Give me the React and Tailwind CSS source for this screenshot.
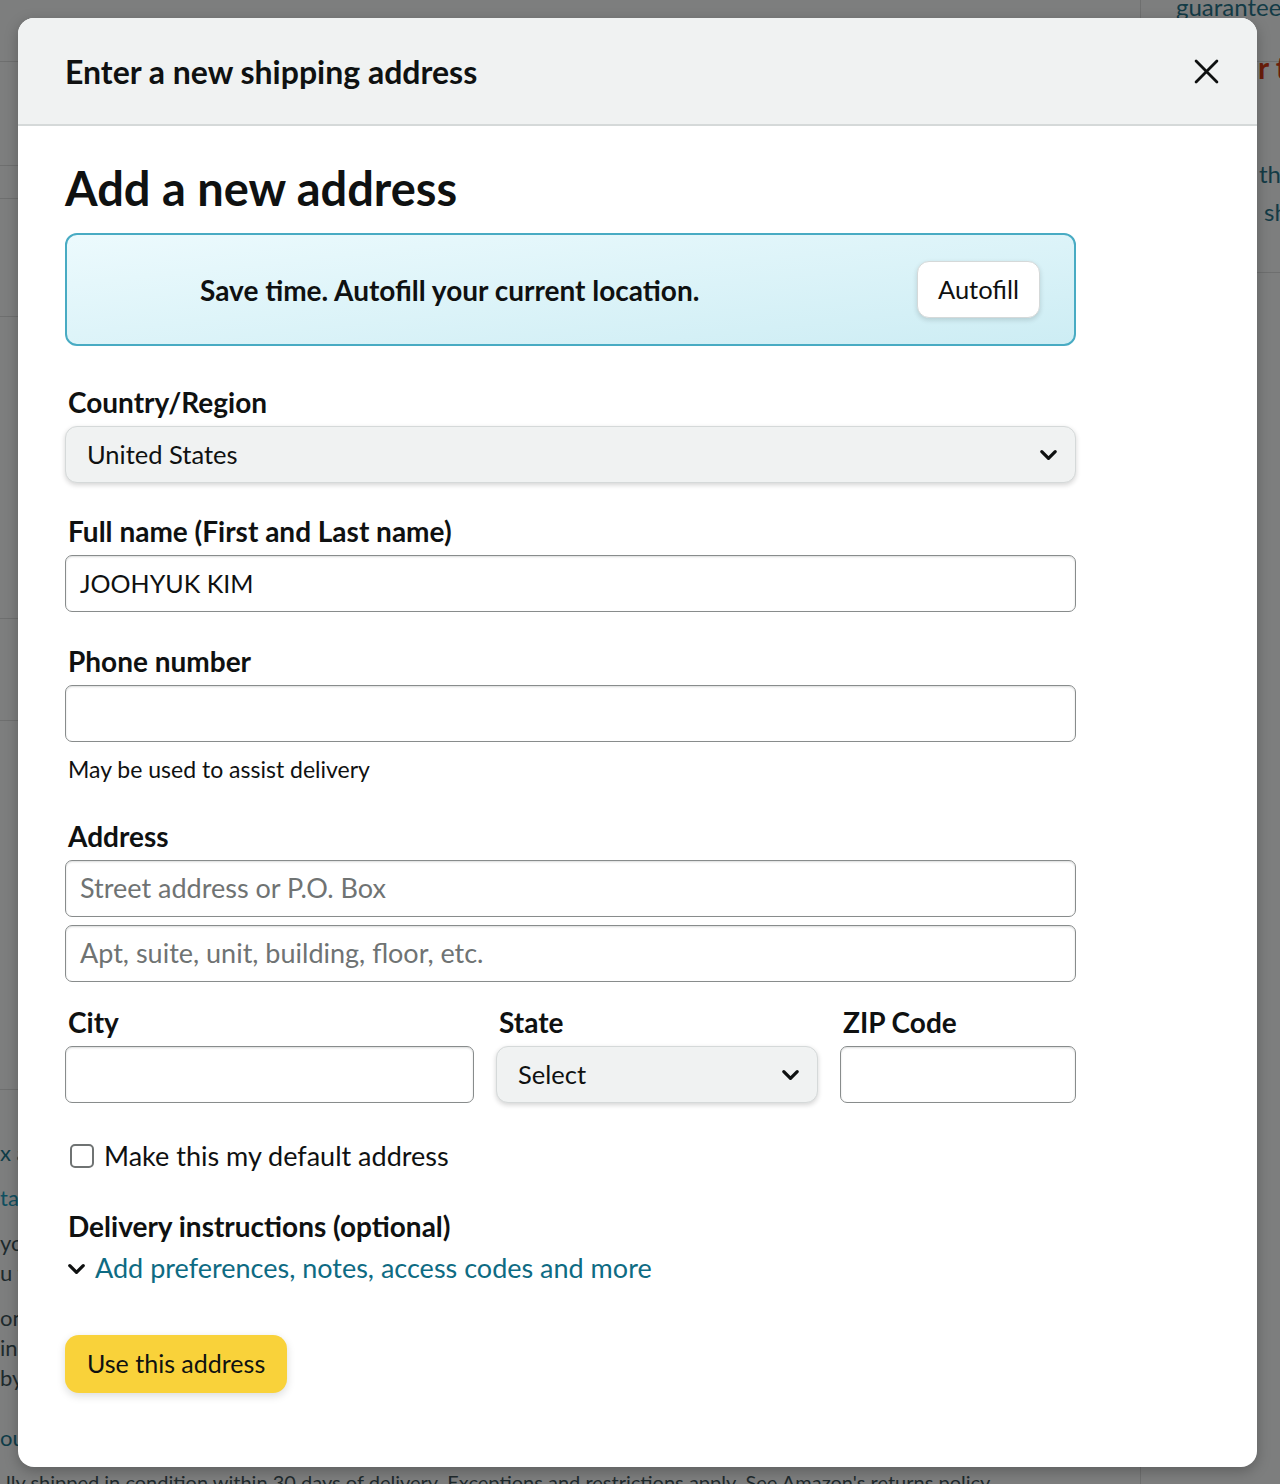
import React from "react";

const font = { fontFamily: "Lato, 'Liberation Sans', sans-serif" };

const Chevron = ({ className = "" }) => (
  <svg viewBox="0 0 24 24" className={className} fill="none" stroke="currentColor" strokeWidth="3.4" strokeLinecap="round" strokeLinejoin="round">
    <path d="M5 9l7 7 7-7" />
  </svg>
);

const Label = ({ children }) => (
  <div className="px-[3px] text-[28px] font-bold leading-[32px] text-[#0f1111]">{children}</div>
);

const TextInput = ({ value, placeholder, className = "" }) => (
  <div className={"flex h-[57px] items-center rounded-[7px] border-[1.5px] border-[#888c8c] bg-white px-[14px] shadow-[inset_0_1px_2px_rgba(15,17,17,0.15)] " + className}>
    {value ? (
      <span className="text-[25px] text-[#0f1111]">{value}</span>
    ) : (
      <span className="text-[27px] text-[#6f7373]">{placeholder}</span>
    )}
  </div>
);

const SelectBox = ({ value, className = "" }) => (
  <div className={"flex h-[57px] items-center justify-between rounded-[12px] border border-[#d5d9d9] bg-[#f0f2f2] pl-[21px] pr-[15px] text-[25.5px] text-[#0f1111] shadow-[0_2px_5px_rgba(15,17,17,0.18)] " + className}>
    <span>{value}</span>
    <Chevron className="h-[23px] w-[23px] text-[#0f1111]" />
  </div>
);

function BackgroundPage() {
  return (
    <div className="flex h-[1484px] w-full bg-[#7d7e7e]">
      <div className="flex w-[1140px] shrink-0 flex-col">
        <div className="h-[62px] shrink-0 border-b border-[#6e6f6f]" />
        <div className="h-[104px] shrink-0 border-b border-[#6e6f6f]" />
        <div className="h-[33px] shrink-0 border-b border-[#6e6f6f]" />
        <div className="h-[118px] shrink-0 border-b border-[#6e6f6f]" />
        <div className="h-[302px] shrink-0 border-b border-[#6e6f6f]" />
        <div className="h-[102px] shrink-0 border-b border-[#6e6f6f]" />
        <div className="h-[369px] shrink-0 border-b border-[#6e6f6f]" />
        <div className="flex shrink-0 flex-col pt-[48px] text-[22px] leading-[30px] text-[#1e2a2d]">
          <span className="text-[#0f3c48]">x a</span>
          <span className="mt-[15px] text-[#0f4f60]">ta</span>
          <span className="mt-[15px]">yo</span>
          <span>u w</span>
          <span className="mt-[15px]">on</span>
          <span>in</span>
          <span>by</span>
          <span className="mt-[30px] text-[#0f3c48]">ou</span>
          <span className="mt-[14px] pl-[6px] text-[20px] whitespace-nowrap">lly shipped in condition within 30 days of delivery. Exceptions and restrictions apply. See Amazon's returns policy</span>
        </div>
      </div>
      <div className="flex flex-1 flex-col border-l border-[#6e6f6f]">
        <div className="h-[62px] shrink-0 border-b border-[#6e6f6f] pl-[35px] text-[24px] leading-[14px] text-[#133b46]">guarantee</div>
        <div className="flex shrink-0 flex-col border-b border-[#6e6f6f] pb-[46px] pl-[117px]">
          <span className="text-[30px] font-bold leading-[10px] text-[#6b1e0c]">r t</span>
          <span className="mt-[88px] pl-[1px] text-[24px] leading-[28px] text-[#133b46]">the</span>
          <span className="mt-[10px] pl-[6px] text-[24px] leading-[28px] text-[#133b46]">sh</span>
        </div>
      </div>
    </div>
  );
}

export default function App() {
  return (
    <div className="relative h-[1484px] w-[1280px] overflow-hidden" style={font}>
      <BackgroundPage />

      {/* Modal */}
      <div className="absolute left-[18px] top-[18px] flex h-[1449px] w-[1239px] flex-col overflow-hidden rounded-[16px] bg-white shadow-[0_4px_14px_rgba(0,0,0,0.25)]">
        {/* Header */}
        <div className="flex h-[108px] shrink-0 items-center justify-between border-b-2 border-[#d5d9d9] bg-[#f0f2f2] pl-[47px] pr-[38px]">
          <h2 className="pt-[2px] text-[32px] font-bold text-[#0f1111]">Enter a new shipping address</h2>
          <svg viewBox="0 0 24 24" className="h-[25px] w-[25px] text-[#0f1111]" fill="none" stroke="currentColor" strokeWidth="2.7" strokeLinecap="round">
            <path d="M2 2l20 20M22 2L2 22" />
          </svg>
        </div>

        {/* Body */}
        <div className="flex w-[1058px] flex-col pl-[47px] pt-[36px]">
          <h1 className="text-[47px] font-bold leading-[52px] text-[#0f1111]">Add a new address</h1>

          <div className="mt-[19px] flex h-[113px] items-center justify-between rounded-[12px] border-2 border-[#48abc3] bg-gradient-to-br from-[#ecfafd] to-[#cdedf4] pl-[133px] pr-[34px]">
            <span className="text-[28px] font-bold text-[#0f1111]">Save time. Autofill your current location.</span>
            <div className="flex h-[57px] items-center rounded-[12px] border border-[#d5d9d9] bg-white px-[20px] text-[25.5px] text-[#0f1111] shadow-[0_2px_5px_rgba(15,17,17,0.15)]">
              Autofill
            </div>
          </div>

          <div className="mt-[40px] flex flex-col gap-[8px]">
            <Label>Country/Region</Label>
            <SelectBox value="United States" />
          </div>

          <div className="mt-[32px] flex flex-col gap-[8px]">
            <Label>Full name (First and Last name)</Label>
            <TextInput value="JOOHYUK KIM" />
          </div>

          <div className="mt-[33px] flex flex-col gap-[8px]">
            <Label>Phone number</Label>
            <TextInput />
            <p className="mt-[4px] px-[3px] text-[23px] leading-[30px] text-[#0f1111]">May be used to assist delivery</p>
          </div>

          <div className="mt-[36px] flex flex-col gap-[8px]">
            <Label>Address</Label>
            <TextInput placeholder="Street address or P.O. Box" />
            <TextInput placeholder="Apt, suite, unit, building, floor, etc." />
          </div>

          <div className="mt-[24px] flex gap-[22px]">
            <div className="flex w-[409px] flex-col gap-[8px]">
              <Label>City</Label>
              <TextInput />
            </div>
            <div className="flex w-[322px] flex-col gap-[8px]">
              <Label>State</Label>
              <SelectBox value="Select" />
            </div>
            <div className="flex flex-1 flex-col gap-[8px]">
              <Label>ZIP Code</Label>
              <TextInput />
            </div>
          </div>

          <label className="mt-[37px] flex h-[32px] items-center gap-[10px] pl-[5px]">
            <span className="h-[24px] w-[24px] rounded-[5px] border-2 border-[#6f7373] bg-white" />
            <span className="text-[27px] text-[#0f1111]">Make this my default address</span>
          </label>

          <div className="mt-[38px] flex flex-col">
            <Label>Delivery instructions (optional)</Label>
            <div className="mt-[10px] flex h-[32px] items-center gap-[7px]">
              <Chevron className="h-[23px] w-[23px] text-[#0f1111]" />
              <span className="text-[27px] text-[#0e6b83]">Add preferences, notes, access codes and more</span>
            </div>
          </div>

          <div className="mt-[51px]">
            <button className="flex h-[58px] items-center rounded-[14px] bg-[#f9d23a] px-[22px] text-[25px] text-[#0f1111] shadow-[0_3px_8px_rgba(15,17,17,0.15)]">
              Use this address
            </button>
          </div>
        </div>
      </div>
    </div>
  );
}
